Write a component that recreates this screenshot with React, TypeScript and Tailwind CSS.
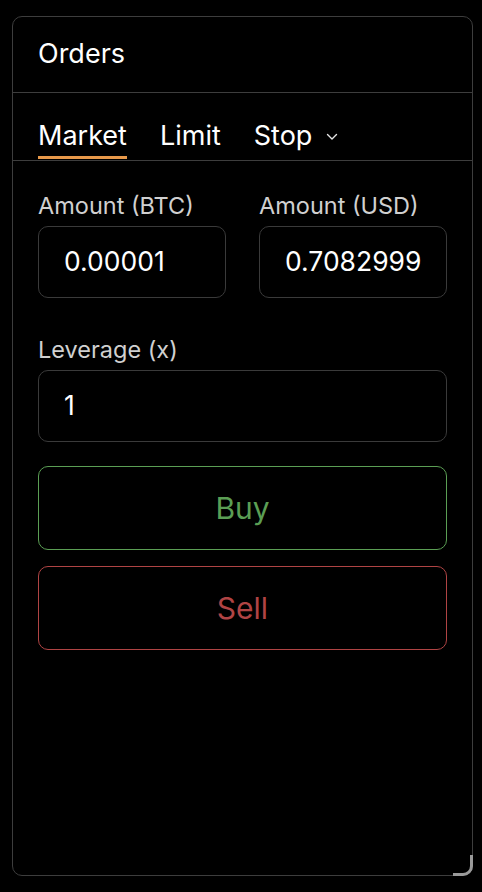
const Field = ({ label, value }: { label: string; value: string }) => {
  return (
    <div className="flex flex-col min-w-0 flex-1">
      <div className="text-[23.5px] leading-[28px] text-[#d0d0d0] mb-[6px]">{label}</div>
      <div className="h-[72px] rounded-[10px] border border-[#3a3a3a] flex items-center px-[25px]">
        <div className="overflow-hidden w-full">
          <span className="text-[26.5px] text-white whitespace-nowrap">{value}</span>
        </div>
      </div>
    </div>
  );
};

const App = () => {
  return (
    <div
      className="w-[482px] h-[892px] bg-black pt-[16px] pl-[12px]"
      style={{ fontFamily: "Inter, 'Noto Sans', sans-serif" }}
    >
      <div className="relative w-[461px] h-[860px] rounded-[10px] border border-[#3d3d3d] flex flex-col">
        <div className="h-[76px] flex items-center px-[25px] border-b border-[#3d3d3d]">
          <span className="text-[27px] text-white">Orders</span>
        </div>
        <div className="h-[68px] flex items-end gap-[33px] px-[25px] border-b border-[#3d3d3d]">
          <div className="flex flex-col">
            <span className="text-[27px] leading-[30px] text-white">Market</span>
            <div className="h-[3px] bg-[#e8994a] mt-[5px] mb-[1px]" />
          </div>
          <div className="flex flex-col">
            <span className="text-[27px] leading-[30px] text-white">Limit</span>
            <div className="h-[3px] mt-[5px] mb-[1px]" />
          </div>
          <div className="flex flex-col">
            <span className="text-[27px] leading-[30px] text-white flex items-center gap-[14px]">
              Stop
              <svg width="12" height="8" viewBox="0 0 12 8" fill="none" className="mt-[2px]">
                <path d="M1.5 1.5L6 6l4.5-4.5" stroke="#e5e5e5" strokeWidth="1.4" strokeLinecap="round" strokeLinejoin="round" />
              </svg>
            </span>
            <div className="h-[3px] mt-[5px] mb-[1px]" />
          </div>
        </div>
        <div className="flex flex-col px-[25px] pt-[31px]">
          <div className="flex gap-[33px]">
            <Field label="Amount (BTC)" value="0.00001" />
            <Field label="Amount (USD)" value="0.70829999" />
          </div>
          <div className="mt-[38px]">
            <Field label="Leverage (x)" value="1" />
          </div>
          <button className="mt-[24px] h-[84px] rounded-[10px] border-[1.6px] border-[#5b9e54] text-[#5b9e54] text-[30px]">
            Buy
          </button>
          <button className="mt-[16px] h-[84px] rounded-[10px] border-[1.6px] border-[#b04444] text-[#b04444] text-[30px]">
            Sell
          </button>
        </div>
        <div className="absolute right-[-1px] bottom-[-1px] w-[20px] h-[21px] border-r-[3px] border-b-[3px] border-[#9a9a9a] rounded-br-[10px]" />
      </div>
    </div>
  );
};

export default App;
